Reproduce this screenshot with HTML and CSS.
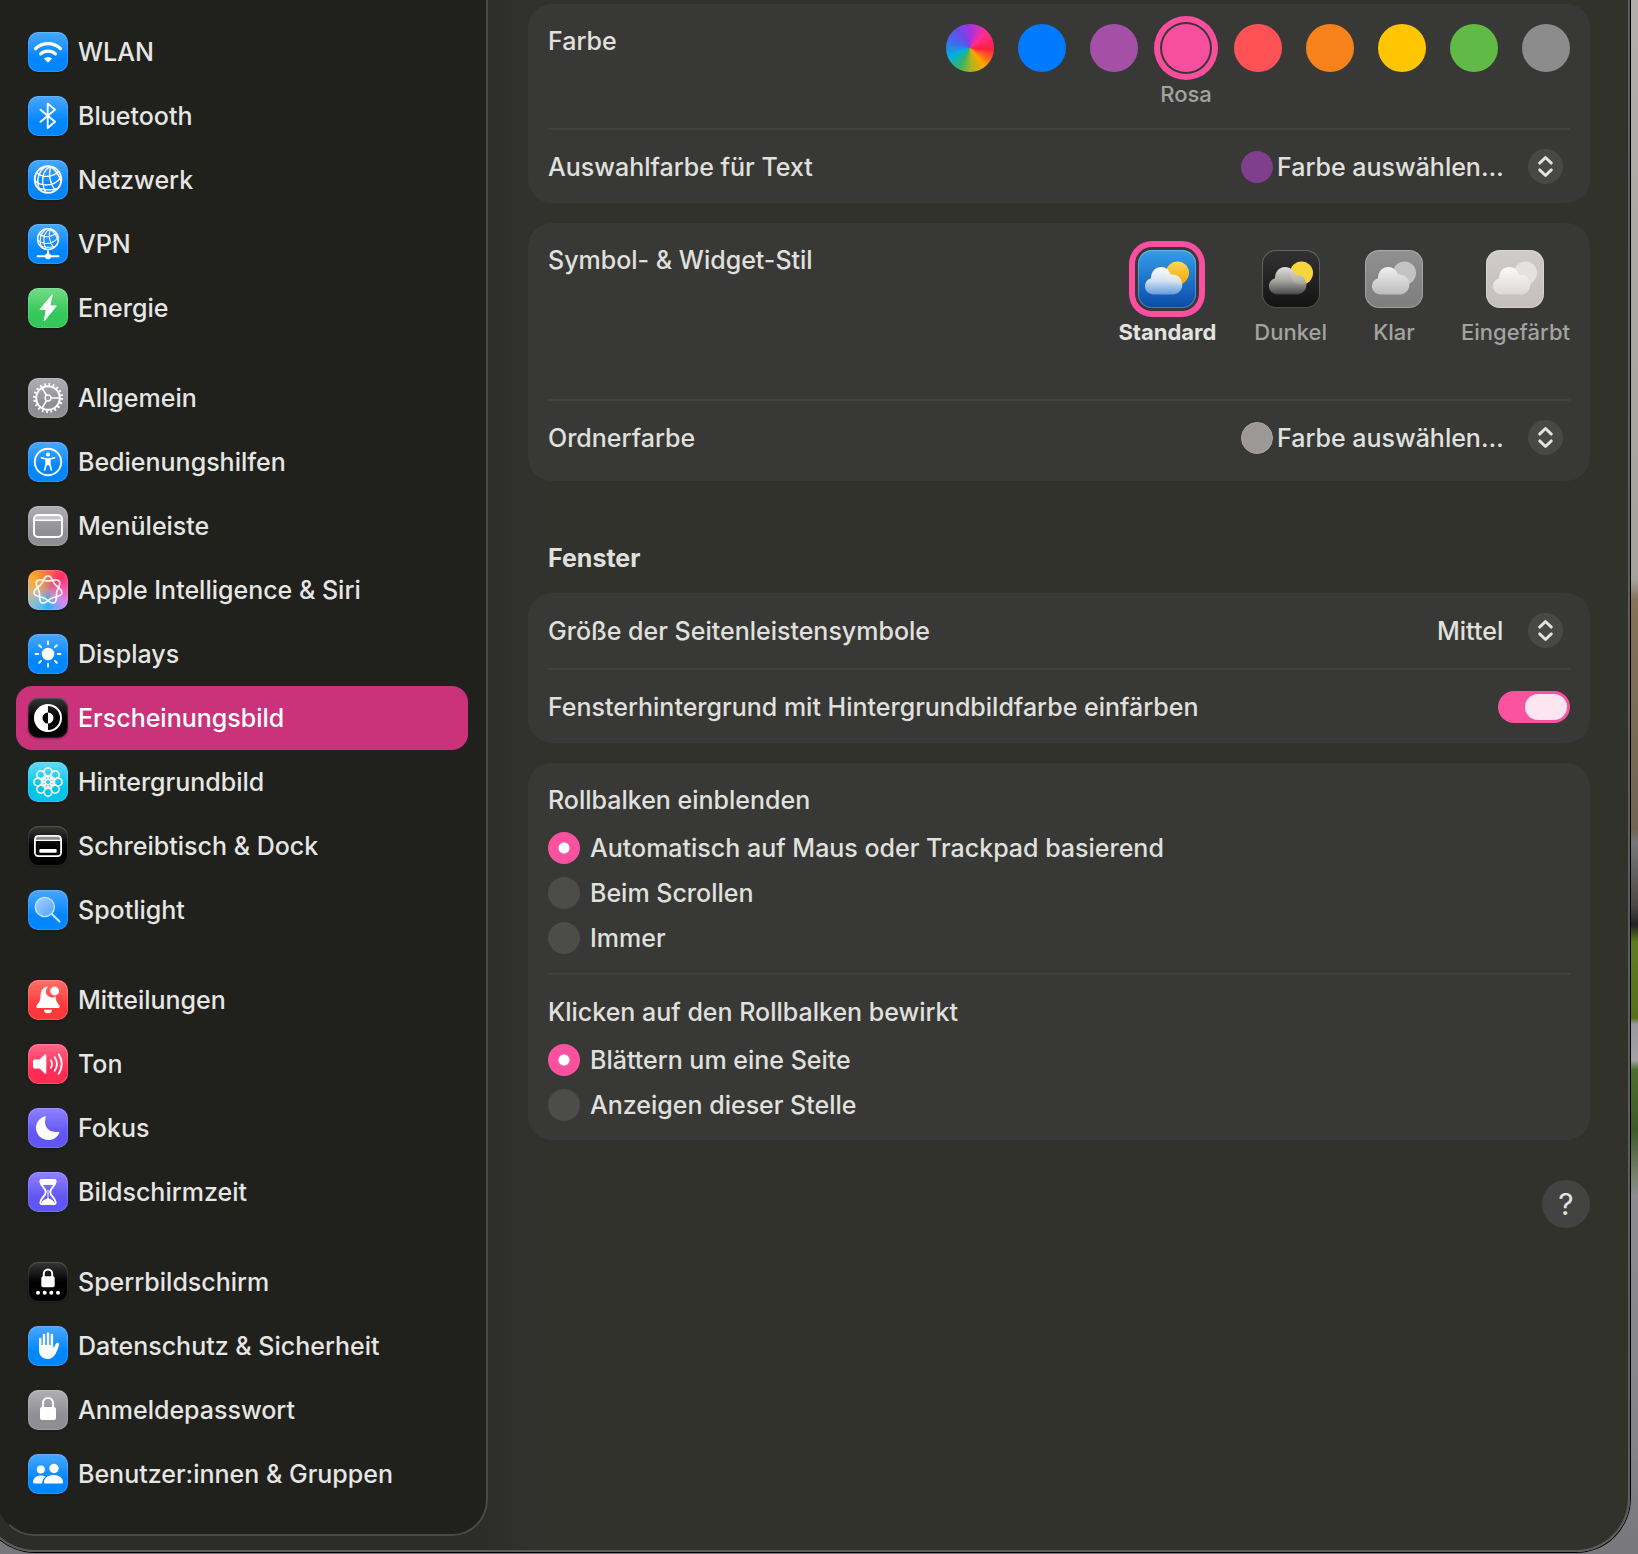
FILE: index.html
```html
<!DOCTYPE html>
<html lang="de">
<head>
  <meta charset="UTF-8" />
  <meta name="viewport" content="width=device-width, initial-scale=1" />
  <title>Erscheinungsbild</title>
  <link rel="stylesheet" href="styles.css">
</head>
<body>

<!-- shared shapes -->
<svg class="defs" width="0" height="0" aria-hidden="true">
  <defs>
    <g id="globe" fill="none" stroke="#fff">
      <circle cx="20" cy="19.5" r="13.3" stroke-width="1.9" />
      <path stroke-width="1.4" d="M23 6.6C15 9 12 20 17.5 32.6M18 6.6C10 11 8 21 11.5 29.5M23 6.6C20 14 22 24 27.5 30.5M23 6.6C27 10 31 15 33 21M8.6 12.5C14 18 25 17.5 30.5 11.5M6.8 20.5C13 27 26 26.5 32.5 18M10 28C15 30 24 30.5 29.5 28.5" />
    </g>
    <path id="lobe" d="M12.96 14.39C15.45 11.26 16.2 5.8 20 5.8C23.8 5.8 24.55 11.26 27.04 14.39" />
    <g id="petal">
      <circle cx="20" cy="9.8" r="3.9" />
      <path d="M18 13.2 20.9 18M22 13.2 19.1 18" />
    </g>
    <path id="cloud" d="M15 44.5A8.3 8.3 0 0 1 13 28.2C13 21.5 17.5 17 23.2 17C27.8 17 31.5 20 32.7 24.6A10 10 0 1 1 36 44.5Z" />
    <linearGradient id="sunDay" x1="0" y1="0" x2="0" y2="1"><stop offset="0" stop-color="#ffd75a" /><stop offset="1" stop-color="#f0a500" /></linearGradient>
    <linearGradient id="cloudDay" x1="0" y1="0" x2="0" y2="1"><stop offset="0" stop-color="#fff" /><stop offset=".5" stop-color="#dce8f5" stop-opacity=".95" /><stop offset="1" stop-color="#6fa3e0" stop-opacity=".9" /></linearGradient>
    <linearGradient id="cloudNight" x1="0" y1="0" x2="0" y2="1"><stop offset="0" stop-color="#e0e0e0" /><stop offset=".5" stop-color="#b0b0ac" stop-opacity=".92" /><stop offset="1" stop-color="#4a4a4a" stop-opacity=".95" /></linearGradient>
    <linearGradient id="cloudClear" x1="0" y1="0" x2="0" y2="1"><stop offset="0" stop-color="#f0f0f0" /><stop offset="1" stop-color="#bcbcbc" /></linearGradient>
    <linearGradient id="cloudTint" x1="0" y1="0" x2="0" y2="1"><stop offset="0" stop-color="#fbfaf9" /><stop offset="1" stop-color="#dbd8d6" /></linearGradient>
    <linearGradient id="lens" x1="0" y1="0" x2="1" y2="1"><stop offset="0" stop-color="#a9d2ff" /><stop offset="1" stop-color="#4ea4ff" /></linearGradient>
  </defs>
</svg>

<div class="window">

  <nav class="sidebar" aria-label="Einstellungen">
    <div class="group">
      <a class="item" href="#wlan">
        <svg class="icon blue" viewBox="0 0 40 40"><g fill="none" stroke="#fff" stroke-width="3.2" stroke-linecap="round"><path d="M7.5 16.6a18.2 18.2 0 0 1 25 0" /><path d="M12.6 21.9a11 11 0 0 1 14.8 0" /></g><path fill="#fff" d="M20 30.7 15.9 26.5a6 6 0 0 1 8.2 0z" /></svg>
        WLAN
      </a>
      <a class="item" href="#bluetooth">
        <svg class="icon blue" viewBox="0 0 40 40"><path fill="none" stroke="#fff" stroke-width="1.9" stroke-linejoin="round" stroke-linecap="round" d="M12.5 13.7 27 25.8 19.7 32V7.6L27 13.7 12.5 25.8" /></svg>
        Bluetooth
      </a>
      <a class="item" href="#netzwerk">
        <svg class="icon blue" viewBox="0 0 40 40"><use href="#globe" /></svg>
        Netzwerk
      </a>
      <a class="item" href="#vpn">
        <svg class="icon blue" viewBox="0 0 40 40"><use href="#globe" transform="translate(4.4 0) scale(.78)" /><path stroke="#fff" stroke-width="2" stroke-linecap="round" d="M9.5 32.2h21M20 27v5" /><circle cx="20" cy="32.2" r="3" fill="#fff" /></svg>
        VPN
      </a>
      <a class="item" href="#energie">
        <svg class="icon green" viewBox="0 0 40 40"><path fill="#fff" stroke="#fff" stroke-linejoin="round" d="M24.2 6.7 12 21.5h6.3L16.2 33 28.3 17.9h-6.5z" /></svg>
        Energie
      </a>
    </div>

    <div class="group">
      <a class="item" href="#allgemein">
        <svg class="icon gray" viewBox="0 0 40 40"><g fill="none" stroke="#fff"><circle cx="20" cy="20" r="13.7" stroke-width="2.6" stroke-dasharray="1.8 2.504" /><circle cx="20" cy="20" r="11.8" stroke-width="2" /><circle cx="20" cy="20" r="2.9" stroke-width="1.5" /><path stroke-width="1.7" d="M23 20h9M18.5 17.4 14 9.7M18.5 22.6 14 30.3" /></g></svg>
        Allgemein
      </a>
      <a class="item" href="#bedienungshilfen">
        <svg class="icon blue" viewBox="0 0 40 40"><circle cx="20" cy="20" r="13.2" fill="none" stroke="#fff" stroke-width="1.9" /><circle cx="20" cy="12.6" r="2" fill="#fff" /><path fill="none" stroke="#fff" stroke-width="1.7" stroke-linecap="round" stroke-linejoin="round" d="M13.6 15.9 18.3 17v5L16.6 28M26.4 15.9 21.7 17v5L23.4 28" /><path fill="#fff" d="M17.8 16.3h4.4v7h-4.4z" /></svg>
        Bedienungshilfen
      </a>
      <a class="item" href="#menueleiste">
        <svg class="icon gray" viewBox="0 0 40 40"><path fill="#fff" fill-opacity=".4" d="M7 9h26v5H7z" /><rect x="6" y="9" width="28" height="22" rx="4" fill="none" stroke="#fff" stroke-width="2" /><path stroke="#fff" stroke-width="1.5" d="M6 14.3h28" /></svg>
        Menüleiste
      </a>
      <a class="item" href="#siri">
        <svg class="icon siri" viewBox="0 0 40 40"><g fill="none" stroke="#fff" stroke-width="1.7" stroke-opacity=".92"><use href="#lobe" /><use href="#lobe" transform="rotate(51.43 20 20)" /><use href="#lobe" transform="rotate(102.86 20 20)" /><use href="#lobe" transform="rotate(154.29 20 20)" /><use href="#lobe" transform="rotate(205.71 20 20)" /><use href="#lobe" transform="rotate(257.14 20 20)" /><use href="#lobe" transform="rotate(308.57 20 20)" /></g></svg>
        Apple Intelligence &amp; Siri
      </a>
      <a class="item" href="#displays">
        <svg class="icon blue" viewBox="0 0 40 40"><circle cx="20" cy="20" r="6.3" fill="#fff" /><path stroke="#fff" stroke-width="2" stroke-linecap="round" d="M20 7.5v2.7M20 29.8v2.7M7.5 20h2.7M29.8 20h2.7M11.2 11.2l1.9 1.9M26.9 26.9l1.9 1.9M11.2 28.8l1.9-1.9M26.9 13.1l1.9-1.9" /></svg>
        Displays
      </a>
      <a class="item active" href="#erscheinungsbild" aria-current="page">
        <svg class="icon black" viewBox="0 0 40 40"><circle cx="20" cy="20" r="13" fill="none" stroke="#fff" stroke-width="2" /><path fill="#fff" d="M20 6.5a13.5 13.5 0 0 0 0 27z" /><path d="M20 14.5a5.5 5.5 0 0 0 0 11z" /><path fill="#fff" d="M20 14.5a5.5 5.5 0 0 1 0 11z" /></svg>
        Erscheinungsbild
      </a>
      <a class="item" href="#hintergrundbild">
        <svg class="icon cyan" viewBox="0 0 40 40"><g fill="none" stroke="#fff" stroke-width="1.6"><use href="#petal" /><use href="#petal" transform="rotate(45 20 20)" /><use href="#petal" transform="rotate(90 20 20)" /><use href="#petal" transform="rotate(135 20 20)" /><use href="#petal" transform="rotate(180 20 20)" /><use href="#petal" transform="rotate(225 20 20)" /><use href="#petal" transform="rotate(270 20 20)" /><use href="#petal" transform="rotate(315 20 20)" /></g></svg>
        Hintergrundbild
      </a>
      <a class="item" href="#dock">
        <svg class="icon black" viewBox="0 0 40 40"><path fill="#fff" fill-opacity=".5" d="M7 10h26v4H7z" /><rect x="6.9" y="9.9" width="26.2" height="20.2" rx="3.5" fill="none" stroke="#fff" stroke-width="1.8" /><path stroke="#fff" stroke-width="1.2" d="M7 14.3h26" /><rect x="11.3" y="23" width="17.4" height="3.8" rx="1" fill="#fff" /></svg>
        Schreibtisch &amp; Dock
      </a>
      <a class="item" href="#spotlight">
        <svg class="icon blue" viewBox="0 0 40 40"><circle cx="16.8" cy="17" r="9.6" fill="url(#lens)" stroke="#c5e0ff" stroke-width="1.4" /><path stroke="#cfe6ff" stroke-width="2.2" stroke-linecap="round" d="M24.3 24.5 31.5 31.5" /></svg>
        Spotlight
      </a>
    </div>

    <div class="group">
      <a class="item" href="#mitteilungen">
        <svg class="icon red" viewBox="0 0 40 40"><path fill="#fff" d="M20.3 6.5c-5 .3-7.8 4-7.8 9 0 6-1.5 7-3.8 9.8-1 1.3-.5 2.7 1 2.7h20.6c1.5 0 2-1.4 1-2.7-2.2-2.7-3.5-4-3.8-9a6 6 0 0 1-7.2-9.8zM16 29.8h8a4 3.5 0 0 1-8 0z" /><circle cx="26.6" cy="11" r="4.4" fill="#fff" /></svg>
        Mitteilungen
      </a>
      <a class="item" href="#ton">
        <svg class="icon pink" viewBox="0 0 40 40"><path fill="#fff" d="M6.8 15.5h4.7l5.3-5c.7-.6 1.5-.3 1.5.6v17.8c0 .9-.8 1.2-1.5.6l-5.3-5H6.800c-1.1 0-1.800-.7-1.800-1.8v-5.400c0-1.100.7-1.800 1.800-1.800z" /><path fill="none" stroke="#fff" stroke-width="1.8" stroke-linecap="round" d="M22.8 16.2a7 7 0 0 1 0 7.6M26.7 13.3a12 12 0 0 1 0 13.4M30.6 10.2a17 17 0 0 1 0 19.6" /></svg>
        Ton
      </a>
      <a class="item" href="#fokus">
        <svg class="icon violet" viewBox="0 0 40 40"><path fill="#fff" d="M17 8.3c.6-.3 1 .1.8.8C14.9 17.8 20 25.5 30.5 23.7c.8-.1 1.2.4.9 1C29.5 29.2 25.3 32 20.6 32 13.6 32 8 26.5 8 19.7c0-5.2 3.6-9.7 9-11.4z" /></svg>
        Fokus
      </a>
      <a class="item" href="#bildschirmzeit">
        <svg class="icon violet" viewBox="0 0 40 40"><path fill="none" stroke="#fff" stroke-width="1.9" stroke-linejoin="round" d="M13.5 8h13c1.3 0 1.3 1.2 1 2.3-.8 4-5.3 6-5.3 9.7s4.5 5.7 5.3 9.7c.3 1.1.3 2.3-1 2.3h-13c-1.3 0-1.3-1.2-1-2.3.8-4 5.3-6 5.3-9.7s-4.5-5.7-5.3-9.7c-.3-1.100-.3-2.300 1-2.300z" /><path fill="#fff" d="M13 8h14l-1 5H14zM13.5 31c1-3.5 4.5-3.5 6-5v-8h1v8c1.5 1.5 5 1.5 6 5z" /></svg>
        Bildschirmzeit
      </a>
    </div>

    <div class="group">
      <a class="item" href="#sperrbildschirm">
        <svg class="icon black" viewBox="0 0 40 40"><rect x="13.3" y="14.2" width="13.4" height="11" rx="1.8" fill="#fff" /><path fill="none" stroke="#fff" stroke-width="2" d="M15.8 15v-3.3a4.2 4.2 0 0 1 8.4 0V15" /><g fill="#fff"><circle cx="10" cy="30.8" r="2" /><circle cx="16.7" cy="30.8" r="2" /><circle cx="23.3" cy="30.8" r="2" /><circle cx="30" cy="30.8" r="2" /></g></svg>
        Sperrbildschirm
      </a>
      <a class="item" href="#datenschutz">
        <svg class="icon blue" viewBox="0 0 40 40"><path fill="none" stroke="#fff" stroke-width="2.5" stroke-linecap="round" d="M12.3 13v10M16 9v12M20 7.4V20M23.9 9v12" /><path fill="#fff" d="M11 19h14.2l.3 3.5c1-1.8 1.7-3.7 2.6-5 .9-1.2 3-.7 2.9.8-.3 3.2-2 7-3.7 10-1.7 3.1-4.2 4.800-7.500 4.800-5.500 0-8.800-3.600-8.800-9z" /></svg>
        Datenschutz &amp; Sicherheit
      </a>
      <a class="item" href="#anmeldepasswort">
        <svg class="icon gray" viewBox="0 0 40 40"><rect x="12" y="17" width="16" height="13" rx="2" fill="#fff" /><path fill="none" stroke="#fff" stroke-width="2.1" d="M15 18v-5a5 5 0 0 1 10 0v5" /></svg>
        Anmeldepasswort
      </a>
      <a class="item" href="#benutzer">
        <svg class="icon blue" viewBox="0 0 40 40"><g fill="#fff"><circle cx="12.8" cy="15.5" r="4" /><path d="M5 28c0-3.8 3.5-6.5 8-6.5 1.8 0 3.3.4 4.5 1.2-2 1.500-3.300 3.800-3.300 6.800H6.500c-1 0-1.500-.6-1.500-1.500z" /><circle cx="26" cy="14.5" r="4.7" /><path d="M16 28c0-3.8 4-7 9.5-7S35 24.2 35 28c0 1-.6 1.500-1.500 1.500h-16c-.9 0-1.500-.5-1.500-1.500z" /></g></svg>
        Benutzer:innen &amp; Gruppen
      </a>
    </div>
  </nav>

  <main class="content">

    <section class="card">
      <div class="row row-colors">
        <span class="label">Farbe</span>
        <div class="colors" role="radiogroup" aria-label="Farbe">
          <label class="color"><input class="multi" type="radio" name="farbe" aria-label="Mehrfarbig"></label>
          <label class="color"><input class="c-blue" type="radio" name="farbe" aria-label="Blau"></label>
          <label class="color"><input class="c-purple" type="radio" name="farbe" aria-label="Lila"></label>
          <label class="color"><input class="c-pink" type="radio" name="farbe" checked><span>Rosa</span></label>
          <label class="color"><input class="c-red" type="radio" name="farbe" aria-label="Rot"></label>
          <label class="color"><input class="c-orange" type="radio" name="farbe" aria-label="Orange"></label>
          <label class="color"><input class="c-yellow" type="radio" name="farbe" aria-label="Gelb"></label>
          <label class="color"><input class="c-green" type="radio" name="farbe" aria-label="Grün"></label>
          <label class="color"><input class="c-gray" type="radio" name="farbe" aria-label="Graphit"></label>
        </div>
      </div>
      <div class="row">
        <label class="label" for="textColor">Auswahlfarbe für Text</label>
        <div class="picker">
          <span class="dot dot-purple"></span>
          <select id="textColor"><option>Farbe auswählen…</option></select>
          <svg class="stepper" viewBox="0 0 36 36"><path d="M12 14.5 18 8.8 24 14.5M12 21.5 18 27.2 24 21.5" /></svg>
        </div>
      </div>
    </section>

    <section class="card card-style">
      <div class="row row-styles">
        <span class="label">Symbol- &amp; Widget-Stil</span>
        <div class="styles" role="radiogroup" aria-label="Symbol- &amp; Widget-Stil">
          <label class="style">
            <input type="radio" name="stil" checked>
            <svg class="tile tile-day" viewBox="0 0 58 58"><circle cx="39.5" cy="23" r="11.5" fill="url(#sunDay)" /><use href="#cloud" fill="url(#cloudDay)" /></svg>
            <span>Standard</span>
          </label>
          <label class="style">
            <input type="radio" name="stil">
            <svg class="tile tile-dark" viewBox="0 0 58 58"><circle cx="39.5" cy="23" r="11.5" fill="#f5d63c" /><use href="#cloud" fill="url(#cloudNight)" /></svg>
            <span>Dunkel</span>
          </label>
          <label class="style">
            <input type="radio" name="stil">
            <svg class="tile tile-clear" viewBox="0 0 58 58"><circle cx="39.5" cy="23" r="11.5" fill="#c3c3c3" /><use href="#cloud" fill="url(#cloudClear)" /></svg>
            <span>Klar</span>
          </label>
          <label class="style">
            <input type="radio" name="stil">
            <svg class="tile tile-tint" viewBox="0 0 58 58"><circle cx="39.5" cy="23" r="11.5" fill="#e4e1df" /><use href="#cloud" fill="url(#cloudTint)" /></svg>
            <span>Eingefärbt</span>
          </label>
        </div>
      </div>
      <div class="row">
        <label class="label" for="folderColor">Ordnerfarbe</label>
        <div class="picker">
          <span class="dot dot-gray"></span>
          <select id="folderColor"><option>Farbe auswählen…</option></select>
          <svg class="stepper" viewBox="0 0 36 36"><path d="M12 14.5 18 8.8 24 14.5M12 21.5 18 27.2 24 21.5" /></svg>
        </div>
      </div>
    </section>

    <h2>Fenster</h2>

    <section class="card">
      <div class="row">
        <label class="label" for="iconSize">Größe der Seitenleistensymbole</label>
        <div class="picker">
          <select id="iconSize"><option>Mittel</option></select>
          <svg class="stepper" viewBox="0 0 36 36"><path d="M12 14.5 18 8.8 24 14.5M12 21.5 18 27.2 24 21.5" /></svg>
        </div>
      </div>
      <div class="row">
        <label class="label" for="tint">Fensterhintergrund mit Hintergrundbildfarbe einfärben</label>
        <input class="switch" type="checkbox" role="switch" id="tint" checked>
      </div>
    </section>

    <section class="card">
      <fieldset>
        <legend>Rollbalken einblenden</legend>
        <label class="option"><input type="radio" name="rollbalken" checked>Automatisch auf Maus oder Trackpad basierend</label>
        <label class="option"><input type="radio" name="rollbalken">Beim Scrollen</label>
        <label class="option"><input type="radio" name="rollbalken">Immer</label>
      </fieldset>
      <fieldset>
        <legend>Klicken auf den Rollbalken bewirkt</legend>
        <label class="option"><input type="radio" name="klick" checked>Blättern um eine Seite</label>
        <label class="option"><input type="radio" name="klick">Anzeigen dieser Stelle</label>
      </fieldset>
    </section>

    <button class="help" type="button" aria-label="Hilfe">?</button>
  </main>

</div>

</body>
</html>
```
FILE: styles.css
```css
* {
  box-sizing: border-box;
}
body {
  margin: 0;
  min-height: 100vh;
  display: flex;
  overflow: hidden;
  font-family: Inter, "Liberation Sans", sans-serif;
  font-size: 25px;
  font-weight: 500;
  line-height: 34px;
  color: #e0e0de;
  /* the desktop behind the window */
  background: linear-gradient(#b0aeab 0, #a5a19c 580px, #84725a 600px, #6f6552 830px, #77777a 842px, #4c4a48 905px, #222226 925px, #5f7d1e 942px, #567018 1018px, #9a9a9c 1024px, #a3a3a5 1060px, #4c6e2c 1070px, #3f5a2a 1130px, #77806c 1175px, #8b8b90 1195px, #858587 1440px, #77777c 100%);
}
.defs {
  position: absolute;
}
.window {
  flex: 1;
  display: flex;
  min-width: 0;
  margin: 0 8px 2px -19px;
  border: 2px solid #5c5c5a;
  border-top: none;
  border-radius: 0 0 54px 54px;
  box-shadow: 0 0 0 1px #000;
  background: linear-gradient(90deg, #2c2c2b 500px, #31312d 550px, #32322d 600px);
}

/* Sidebar */
.sidebar {
  flex: none;
  width: 490px;
  margin: 0 0 14px 15px;
  padding: 20px 18px 28px 16px;
  border: 2px solid #484845;
  border-top: none;
  border-left-color: transparent;
  border-radius: 0 0 36px 36px;
  background: #20201d;
}
.group + .group {
  margin-top: 26px;
}
.item {
  display: flex;
  align-items: center;
  gap: 10px;
  height: 64px;
  padding: 0 12px;
  border-radius: 16px;
  color: #e6e6e4;
  text-decoration: none;
  white-space: nowrap;
}
.item.active {
  background: #ca3279;
  color: #fff;
}
.icon {
  flex: none;
  width: 40px;
  height: 40px;
  border-radius: 10px;
  box-shadow: inset 0 0 1px 1px rgba(255, 255, 255, 0.15), 0 1px 2px rgba(0, 0, 0, 0.3);
}
.blue {
  background: linear-gradient(#49a8ff, #0086ff 65%);
}
.green {
  background: linear-gradient(#72dc85, #34c759 65%);
}
.gray {
  background: linear-gradient(#b0b0b4, #8e8e94 65%);
}
.black {
  background: linear-gradient(#383838, #000 50%);
}
.cyan {
  background: linear-gradient(#5fdcfa, #00c3ea 65%);
}
.red {
  background: linear-gradient(#ff7069, #ff383c 65%);
}
.pink {
  background: linear-gradient(#ff6788, #ff2d55 65%);
}
.violet {
  background: linear-gradient(#8f82ff, #6155f5 65%);
}
.siri {
  background: radial-gradient(circle at 50% 50%, rgba(190, 140, 150, 0.9), transparent 45%), conic-gradient(from 0deg, #ff6a4d, #ff3068 45deg, #f05fb0 90deg, #d08cf5 130deg, #2fb4f5 180deg, #7cc0dc 220deg, #d6b58a 265deg, #ffa82c 310deg, #ff6a4d);
}

/* Content */
.content {
  flex: 1;
  min-width: 0;
  display: flex;
  flex-direction: column;
  padding: 4px 38px 40px 40px;
}
.card {
  margin-bottom: 20px;
  padding: 0 20px;
  border-radius: 24px;
  background: #383836;
}
.card-style {
  padding-bottom: 7px;
}
.row {
  display: flex;
  align-items: center;
  justify-content: space-between;
  min-height: 75px;
}
.row + .row,
fieldset + fieldset {
  border-top: 2px solid #41413f;
}
.row-colors,
.row-styles {
  align-items: flex-start;
}
.row-colors {
  min-height: 124px;
  padding-top: 20px;
}
.row-styles {
  min-height: 176px;
  padding-top: 20px;
}
.colors {
  display: flex;
  gap: 24px;
}
.color {
  display: flex;
  flex-direction: column;
  align-items: center;
  width: 48px;
  gap: 5px;
  font-size: 22px;
  color: #a3a3a1;
}
.color input {
  appearance: none;
  flex: none;
  width: 48px;
  height: 48px;
  margin: 0;
  border-radius: 50%;
}
.color input:checked {
  box-shadow: 0 0 0 2px #383836, 0 0 0 8px #fa4f9e;
}
.multi {
  background: conic-gradient(#a033e0, #ff2d96 45deg, #ff1f3d 95deg, #ffa500 140deg, #b0b41e 175deg, #35b36a 210deg, #00b4d8 245deg, #3a6ff0 285deg, #6a4be6 325deg, #a033e0);
}
.c-blue { background: #007aff; }
.c-purple { background: #a550a7; }
.c-pink { background: #f74f9e; }
.c-red { background: #ff5257; }
.c-orange { background: #f7821b; }
.c-yellow { background: #ffc600; }
.c-green { background: #62ba46; }
.c-gray { background: #8c8c8c; }

.picker {
  display: flex;
  align-items: center;
  padding-right: 7px;
}
.dot {
  width: 32px;
  height: 32px;
  margin-right: 4px;
  border-radius: 50%;
}
.dot-purple {
  background: #803f8a;
}
.dot-gray {
  background: #9c9895;
  border: 1px solid #aaa6a3;
}
select {
  appearance: none;
  margin: 0 24px 0 0;
  padding: 0;
  border: none;
  background: none;
  color: inherit;
  font: inherit;
}
.stepper {
  width: 35px;
  height: 35px;
  border-radius: 50%;
  background: #484845;
  fill: none;
  stroke: #e3e3e1;
  stroke-width: 3;
  stroke-linecap: round;
  stroke-linejoin: round;
}

.styles {
  display: flex;
  gap: 38px;
}
.style {
  display: flex;
  flex-direction: column;
  align-items: center;
  gap: 7px;
  padding-top: 7px;
  font-size: 22px;
  color: #a3a3a1;
}
.style input {
  position: absolute;
  opacity: 0;
}
.tile {
  width: 58px;
  height: 58px;
  border-radius: 14px;
  box-shadow: inset 0 0 0 1px rgba(255, 255, 255, 0.25);
}
.style input:checked + .tile {
  box-shadow: inset 0 0 0 1px rgba(255, 255, 255, 0.25), 0 0 0 3px #383836, 0 0 0 9px #fa4f9e;
}
.style input:checked ~ span {
  font-weight: 700;
  color: #e3e3e1;
}
.tile-day {
  background: linear-gradient(#349fe8, #0a4aa8);
}
.tile-dark {
  background: linear-gradient(#323232, #131313);
}
.tile-clear {
  background: linear-gradient(#909090, #7e7e7e);
}
.tile-tint {
  background: linear-gradient(#cfcbca, #c4bfbd);
}

h2 {
  margin: 40px 20px 18px;
  font-size: 25px;
  line-height: 34px;
  font-weight: 700;
}
.switch {
  appearance: none;
  flex: none;
  display: flex;
  justify-content: flex-end;
  width: 72px;
  height: 32px;
  margin: 0;
  padding: 3px;
  border-radius: 16px;
  background: #fa529f;
}
.switch::before {
  content: "";
  width: 42px;
  height: 26px;
  border-radius: 13px;
  background: #fee6f1;
}
.switch:not(:checked) {
  justify-content: flex-start;
  background: #50504e;
}

fieldset {
  margin: 0;
  padding: 20px 0 13px;
  border: none;
}
legend {
  float: left;
  width: 100%;
  margin-bottom: 8px;
  padding: 0;
}
.option {
  clear: both;
  display: flex;
  align-items: center;
  gap: 10px;
  height: 45px;
}
.option input {
  appearance: none;
  flex: none;
  width: 32px;
  height: 32px;
  margin: 0;
  border-radius: 50%;
  background: #4c4c4a;
}
.option input:checked {
  background: radial-gradient(circle, #fff 5px, #fa529f 6px);
}
.help {
  align-self: flex-end;
  width: 48px;
  height: 48px;
  margin-top: 20px;
  padding: 0;
  border: none;
  border-radius: 50%;
  background: #434341;
  color: #e3e3e1;
  font: 400 30px/48px Inter, "Liberation Sans", sans-serif;
}
```
